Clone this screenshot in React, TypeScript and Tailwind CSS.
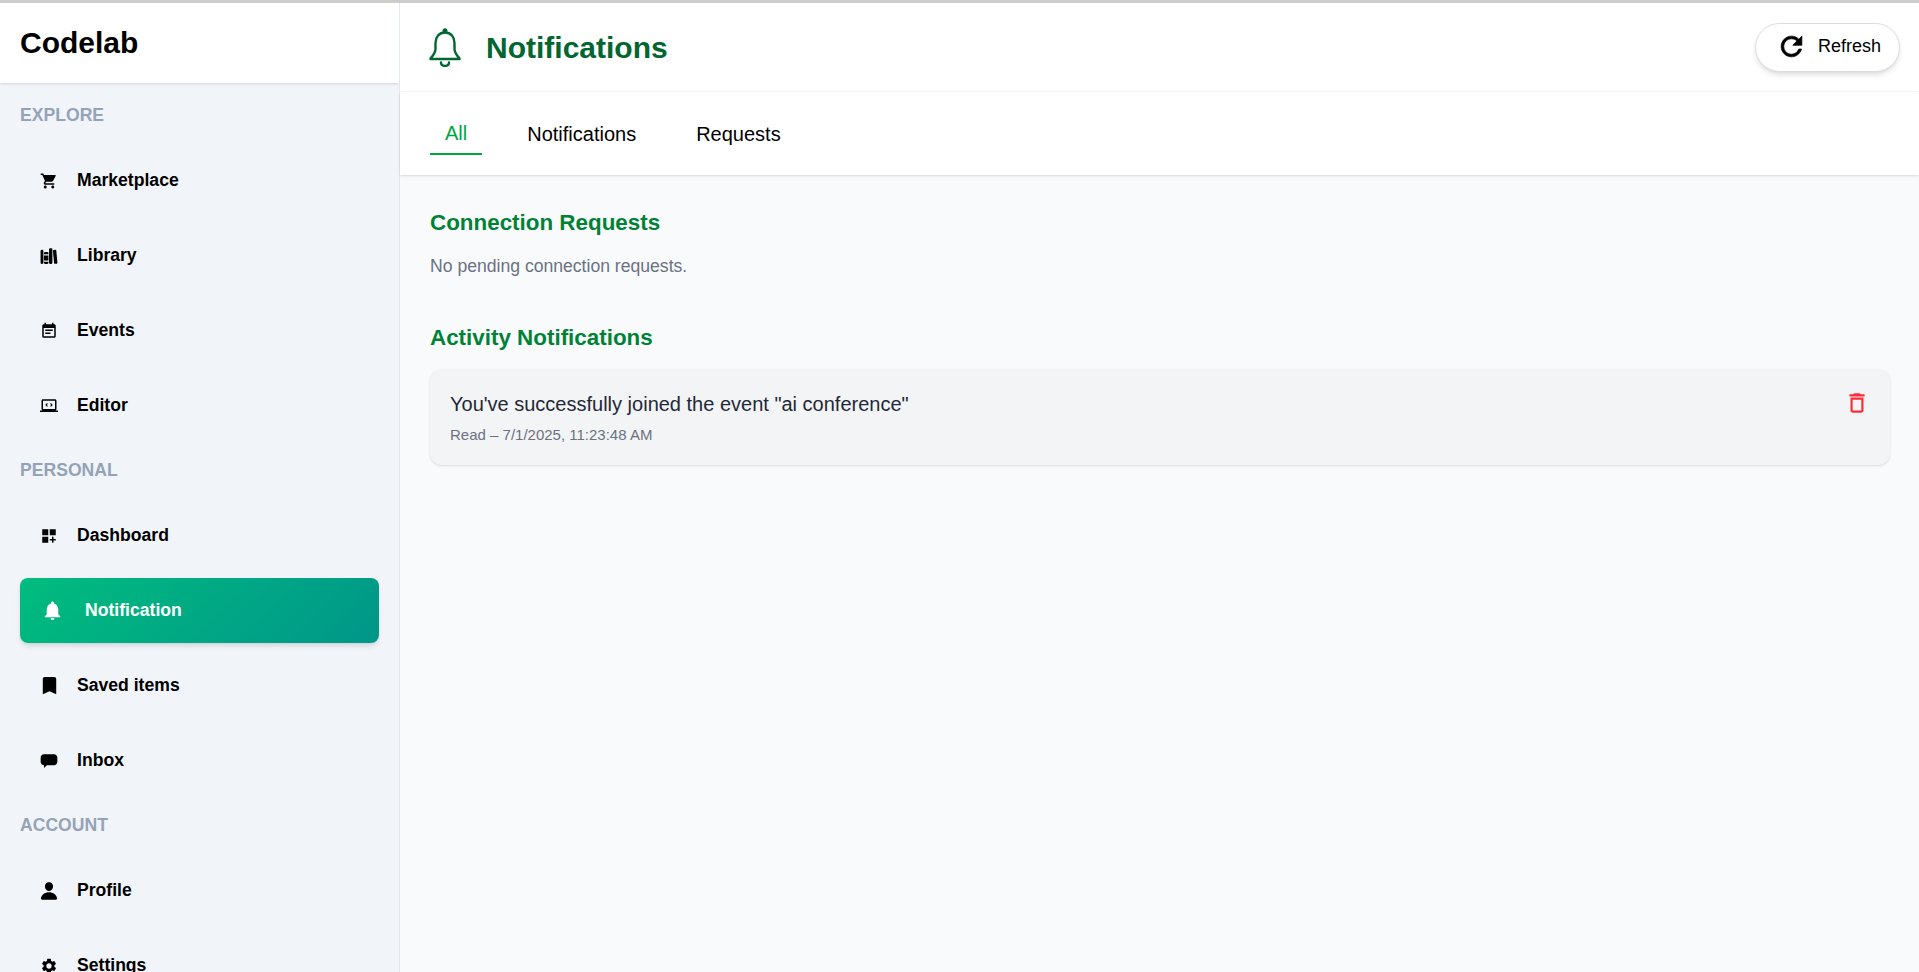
import React from 'react';
import {
  MdShoppingCart,
  MdEventNote,
  MdDashboardCustomize,
  MdNotifications,
  MdBookmark,
  MdSettings,
  MdDeleteOutline,
} from 'react-icons/md';
import { IoLibrary, IoPerson } from 'react-icons/io5';

const EditorIcon = ({ className }: { className?: string }) => (
  <svg viewBox="0 0 24 24" fill="currentColor" className={className}>
    <path d="M20 18c1.100 0 2-.9 2-2V5c0-1.100-.9-2-2-2H4c-1.100 0-2 .9-2 2v11c0 1.100.9 2 2 2H0v2h24v-2h-4zM4 5h16v11H4V5z" />
    <path d="M9.500 8 7 10.500l2.500 2.500 1-1L9 10.500 10.500 9zM14.500 8l-1 1 1.500 1.500-1.500 1.500 1 1 2.500-2.500z" />
  </svg>
);

const InboxIcon = ({ className }: { className?: string }) => (
  <svg viewBox="0 0 24 24" fill="currentColor" className={className}>
    <path d="M6 4h12c2.200 0 4 1.800 4 4v5c0 2.200-1.800 4-4 4H9.500L6 20.500V17c-2.200 0-4-1.800-4-4V8c0-2.200 1.800-4 4-4z" />
  </svg>
);

const HeaderBell = ({ className }: { className?: string }) => (
  <svg viewBox="0 0 32 39" fill="none" stroke="currentColor" strokeWidth="2.4" strokeLinecap="round" strokeLinejoin="round" className={className}>
    <circle cx="16" cy="2.800" r="1.300" fill="currentColor" />
    <path d="M16 4.500C10 4.500 6.500 9 6.500 15v6c0 4-2.500 6.500-5 9.500v.5h29v-.5c-2.500-3-5-5.500-5-9.500v-6c0-6-3.500-10.500-9.500-10.500z" />
    <path d="M12 34.500c0 4.500 8 4.500 8 0" />
  </svg>
);

const RefreshIcon = ({ className }: { className?: string }) => (
  <svg viewBox="0 0 24 24" fill="currentColor" stroke="currentColor" strokeWidth="0.6" className={className}>
    <path d="M17.650 6.350C16.200 4.900 14.210 4 12 4c-4.420 0-7.990 3.580-7.990 8s3.570 8 7.990 8c3.730 0 6.840-2.550 7.730-6h-2.080c-.82 2.330-3.040 4-5.650 4-3.310 0-6-2.690-6-6s2.690-6 6-6c1.660 0 3.140.69 4.220 1.780L13 11h7V4l-2.350 2.350z" />
  </svg>
);

type NavEntry = {
  label: string;
  icon: React.ComponentType<{ className?: string }>;
  size: string;
  active?: boolean;
};

const sections: { title: string; items: NavEntry[] }[] = [
  {
    title: 'EXPLORE',
    items: [
      { label: 'Marketplace', icon: MdShoppingCart, size: 'h-[18px] w-[18px]' },
      { label: 'Library', icon: IoLibrary, size: 'h-[18px] w-[18px]' },
      { label: 'Events', icon: MdEventNote, size: 'h-[18px] w-[18px]' },
      { label: 'Editor', icon: EditorIcon, size: 'h-[18px] w-[18px]' },
    ],
  },
  {
    title: 'PERSONAL',
    items: [
      { label: 'Dashboard', icon: MdDashboardCustomize, size: 'h-[18px] w-[18px]' },
      { label: 'Notification', icon: MdNotifications, size: 'h-[23px] w-[23px]', active: true },
      { label: 'Saved items', icon: MdBookmark, size: 'h-[23px] w-[23px]' },
      { label: 'Inbox', icon: InboxIcon, size: 'h-[20px] w-[20px]' },
    ],
  },
  {
    title: 'ACCOUNT',
    items: [
      { label: 'Profile', icon: IoPerson, size: 'h-[20px] w-[20px]' },
      { label: 'Settings', icon: MdSettings, size: 'h-[18px] w-[18px]' },
    ],
  },
];

const NavItem = ({ item }: { item: NavEntry }) => {
  const Icon = item.icon;
  const box = 'flex h-[24px] w-[24px] shrink-0 items-center justify-center';
  if (item.active) {
    return (
      <a className="flex h-[65px] items-center rounded-lg bg-linear-135 from-emerald-500 to-teal-600 pl-[20px] font-bold text-white shadow-md">
        <span className={box}>
          <Icon className={item.size} />
        </span>
        <span className="ml-[21px] text-[17.6px]">{item.label}</span>
      </a>
    );
  }
  return (
    <a className="flex h-[65px] items-center pl-[17px] font-bold text-black">
      <span className={box}>
        <Icon className={item.size} />
      </span>
      <span className="ml-[16px] text-[17.6px]">{item.label}</span>
    </a>
  );
};

export default function App() {
  return (
    <div className="flex h-screen overflow-hidden border-t-[3px] border-[#cccccc] bg-[#f9fafb] font-['Liberation_Sans',Arial,sans-serif]">
      <aside className="flex w-[400px] shrink-0 flex-col overflow-hidden border-r border-[#e2e8f0] bg-[#f1f5f9]">
        <div className="z-10 flex h-[80px] shrink-0 items-center bg-white pb-[2px] pl-[20px] shadow-sm">
          <span className="text-[30px] font-bold text-black">Codelab</span>
        </div>
        <nav className="flex flex-col px-[20px] pt-[21px]">
          {sections.map((section) => (
            <div key={section.title}>
              <div className="flex h-[22px] items-center text-[17.6px] font-bold text-[#94a3b8]">{section.title}</div>
              <div className="mt-[22px] mb-[21px] flex flex-col gap-[10px]">
                {section.items.map((item) => (
                  <NavItem key={item.label} item={item} />
                ))}
              </div>
            </div>
          ))}
        </nav>
      </aside>

      <main className="flex min-w-0 flex-1 flex-col">
        <header className="flex h-[89px] shrink-0 items-center justify-between border-b border-[#f8f8f8] bg-white pr-[19px] pl-[29px]">
          <div className="flex items-center gap-[25px]">
            <HeaderBell className="h-[39px] w-[32px] text-[#016630]" />
            <h1 className="text-[30px] font-bold text-[#016630]">Notifications</h1>
          </div>
          <button className="mt-[20px] flex h-[49px] w-[145px] items-center justify-center gap-[11px] self-start rounded-full border border-[#d9dbe3] bg-white pb-[2px] pl-[2px] text-[18px] text-black shadow-md">
            <RefreshIcon className="h-[31px] w-[31px]" />
            Refresh
          </button>
        </header>

        <div className="flex h-[83px] shrink-0 items-start gap-[30px] bg-white pl-[30px] shadow-sm">
          <button className="mt-[26px] h-[37px] border-b-2 border-[#00a63e] px-[15px] pb-[5px] text-[20px] text-[#00a63e]">All</button>
          <button className="mt-[26px] h-[32px] px-[15px] text-[20px] text-black">Notifications</button>
          <button className="mt-[26px] h-[32px] px-[15px] text-[20px] text-black">Requests</button>
        </div>

        <div className="flex-1 pt-[31px] pr-[29px] pl-[30px]">
          <h2 className="text-[22.4px] font-bold text-[#008236]">Connection Requests</h2>
          <p className="mt-[13px] text-[17.6px] text-[#6a7282]">No pending connection requests.</p>
          <h2 className="mt-[42px] text-[22.4px] font-bold text-[#008236]">Activity Notifications</h2>
          <div className="mt-[14px] flex items-start justify-between rounded-xl bg-[#f3f4f6] px-[20px] pt-[20px] pb-[19px] shadow-sm">
            <div>
              <p className="text-[20px] text-[#1e2939]">You've successfully joined the event "ai conference"</p>
              <p className="mt-[5px] text-[15px] text-[#6a7282]">Read – 7/1/2025, 11:23:48 AM</p>
            </div>
            <MdDeleteOutline className="mt-[1px] h-[26px] w-[26px] text-[#fb2c36]" />
          </div>
        </div>
      </main>
    </div>
  );
}
